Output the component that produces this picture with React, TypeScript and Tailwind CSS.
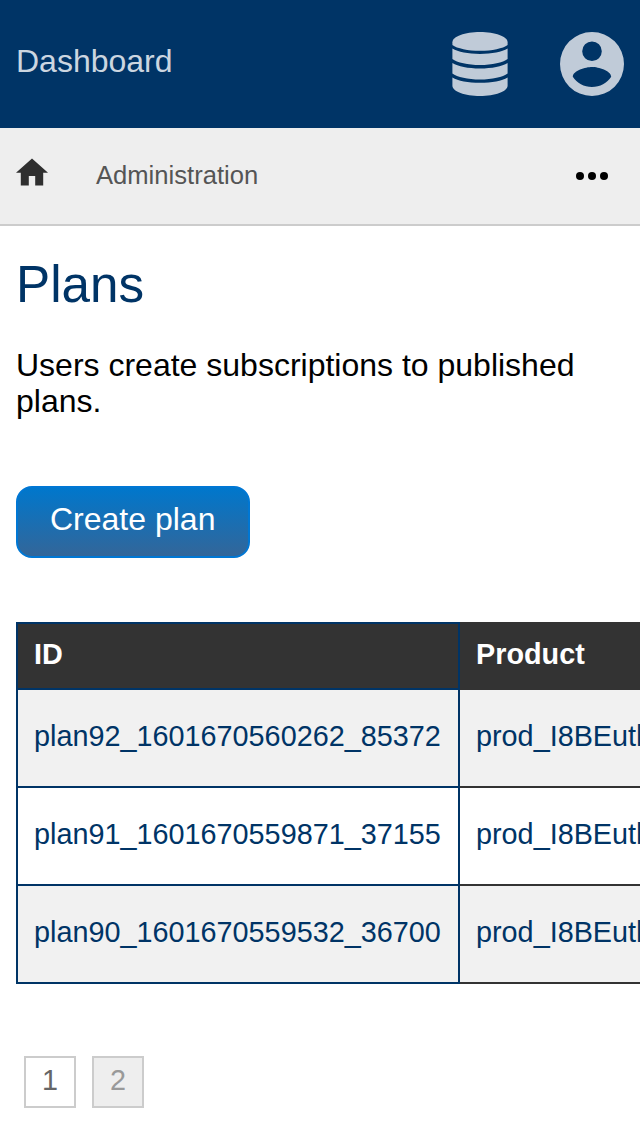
const plans = [
  'plan92_1601670560262_85372',
  'plan91_1601670559871_37155',
  'plan90_1601670559532_36700',
];

function DatabaseIcon() {
  return (
    <svg width="56" height="64" viewBox="0 0 56 64" fill="currentColor" aria-hidden="true">
      <path d="M28 0C43 0 55.6 4.4 55.6 10.2V13C51 16.5 40 18.8 28 18.8S5 16.5.4 13V10.2C.4 4.4 13 0 28 0Z" />
      <path d="M.4 16.6C6 20 16 22 28 22s22-2 27.6-5.4V27C51 30.5 40 33 28 33S5 30.5.4 27Z" />
      <path d="M.4 31C6 34.4 16 36.5 28 36.5s22-2.1 27.6-5.5v10.4C51 45 40 47.4 28 47.4S5 45 .4 41.4Z" />
      <path d="M.4 45.4C6 48.8 16 50.8 28 50.8s22-2 27.6-5.4v8.4C55.6 59.6 43 64 28 64S.4 59.6 .4 53.8Z" />
    </svg>
  );
}

function AccountIcon() {
  return (
    <svg width="64" height="64" viewBox="0 0 64 64" fill="currentColor" aria-hidden="true">
      <path
        fillRule="evenodd"
        d="M32 0a32 32 0 1 1 0 64a32 32 0 0 1 0-64ZM32 9.4a9.8 9.8 0 1 0 0 19.6a9.8 9.8 0 0 0 0-19.6ZM32 55.04c8 0 15.06-4.1 19.2-10.3C51.1 38.4 38.4 34.9 32 34.9s-19.1 3.5-19.2 9.84C16.94 50.94 24 55.04 32 55.04Z"
      />
    </svg>
  );
}

function HomeIcon() {
  return (
    <svg width="32" height="28" viewBox="0 -0.4 32 28" fill="currentColor" aria-hidden="true">
      <path d="M12.8 27.2v-9.6h6.4v9.6h8V14.4H32L16 0 0 14.4h4.8v12.8Z" />
    </svg>
  );
}

function MoreIcon() {
  return (
    <svg width="32" height="8" viewBox="0 0 32 8" fill="currentColor" aria-hidden="true">
      <circle cx="4" cy="4" r="4" />
      <circle cx="16" cy="4" r="4" />
      <circle cx="28" cy="4" r="4" />
    </svg>
  );
}

export default function App() {
  return (
    <div className="h-[1136px] w-[640px] overflow-hidden bg-white font-['Liberation_Sans',Arial,sans-serif] text-[32px] leading-9 text-black">
      <header className="flex h-32 items-start justify-between bg-[#003466] px-4">
        <a className="pt-[43px] text-[#ccd6e0]">Dashboard</a>
        <div className="flex gap-[52px] pt-8 text-[#c0cbd8]">
          <DatabaseIcon />
          <AccountIcon />
        </div>
      </header>

      <nav className="flex h-[98px] items-center border-b-2 border-[#ccc] bg-[#eee] pl-4 pr-8">
        <a className="mb-2 text-[#2f2f2f]">
          <HomeIcon />
        </a>
        <a className="mb-0.5 ml-12 text-[25.6px] leading-[30px] text-[#555]">Administration</a>
        <button className="ml-auto">
          <MoreIcon />
        </button>
      </nav>

      <main className="px-4">
        <h1 className="pt-[29px] text-[51.2px] leading-[59px] text-[#003466]">Plans</h1>
        <p className="mt-[33px]">Users create subscriptions to published plans.</p>
        <button className="mt-[67px] flex h-[72px] w-[234px] rounded-2xl border-2 border-[#0077d4] bg-linear-to-b/srgb from-[#0077cc] to-[#336699] pl-8 pt-[13px] text-white">
          Create plan
        </button>

        <table className="mt-16 w-[940px] table-fixed border-collapse text-left text-[28.8px] leading-8">
          <colgroup>
            <col className="w-[442px]" />
            <col className="w-[498px]" />
          </colgroup>
          <thead>
            <tr className="h-[66px] bg-[#333] text-white">
              <th className="border-2 border-[#003466] px-4 pb-1">ID</th>
              <th className="border-y-2 border-[#333] px-4 pb-1">Product</th>
            </tr>
          </thead>
          <tbody>
            {plans.map((plan) => (
              <tr key={plan} className="h-[98px] text-[#003466] odd:bg-[#f1f1f1]">
                <td className="border-2 border-[#003466] px-4 pb-1">{plan}</td>
                <td className="border-y-2 border-[#333] px-4 pb-1">prod_I8BEuthQ7vWz2p</td>
              </tr>
            ))}
          </tbody>
        </table>

        <div className="mt-[72px] flex gap-4 pl-2 text-[28.8px] leading-8">
          <a className="flex size-[52px] justify-center border-2 border-[#ccc] pt-1.5 text-[#666]">1</a>
          <a className="flex size-[52px] justify-center border-2 border-[#ccc] bg-[#eee] pt-1.5 text-[#999]">2</a>
        </div>
      </main>
    </div>
  );
}
